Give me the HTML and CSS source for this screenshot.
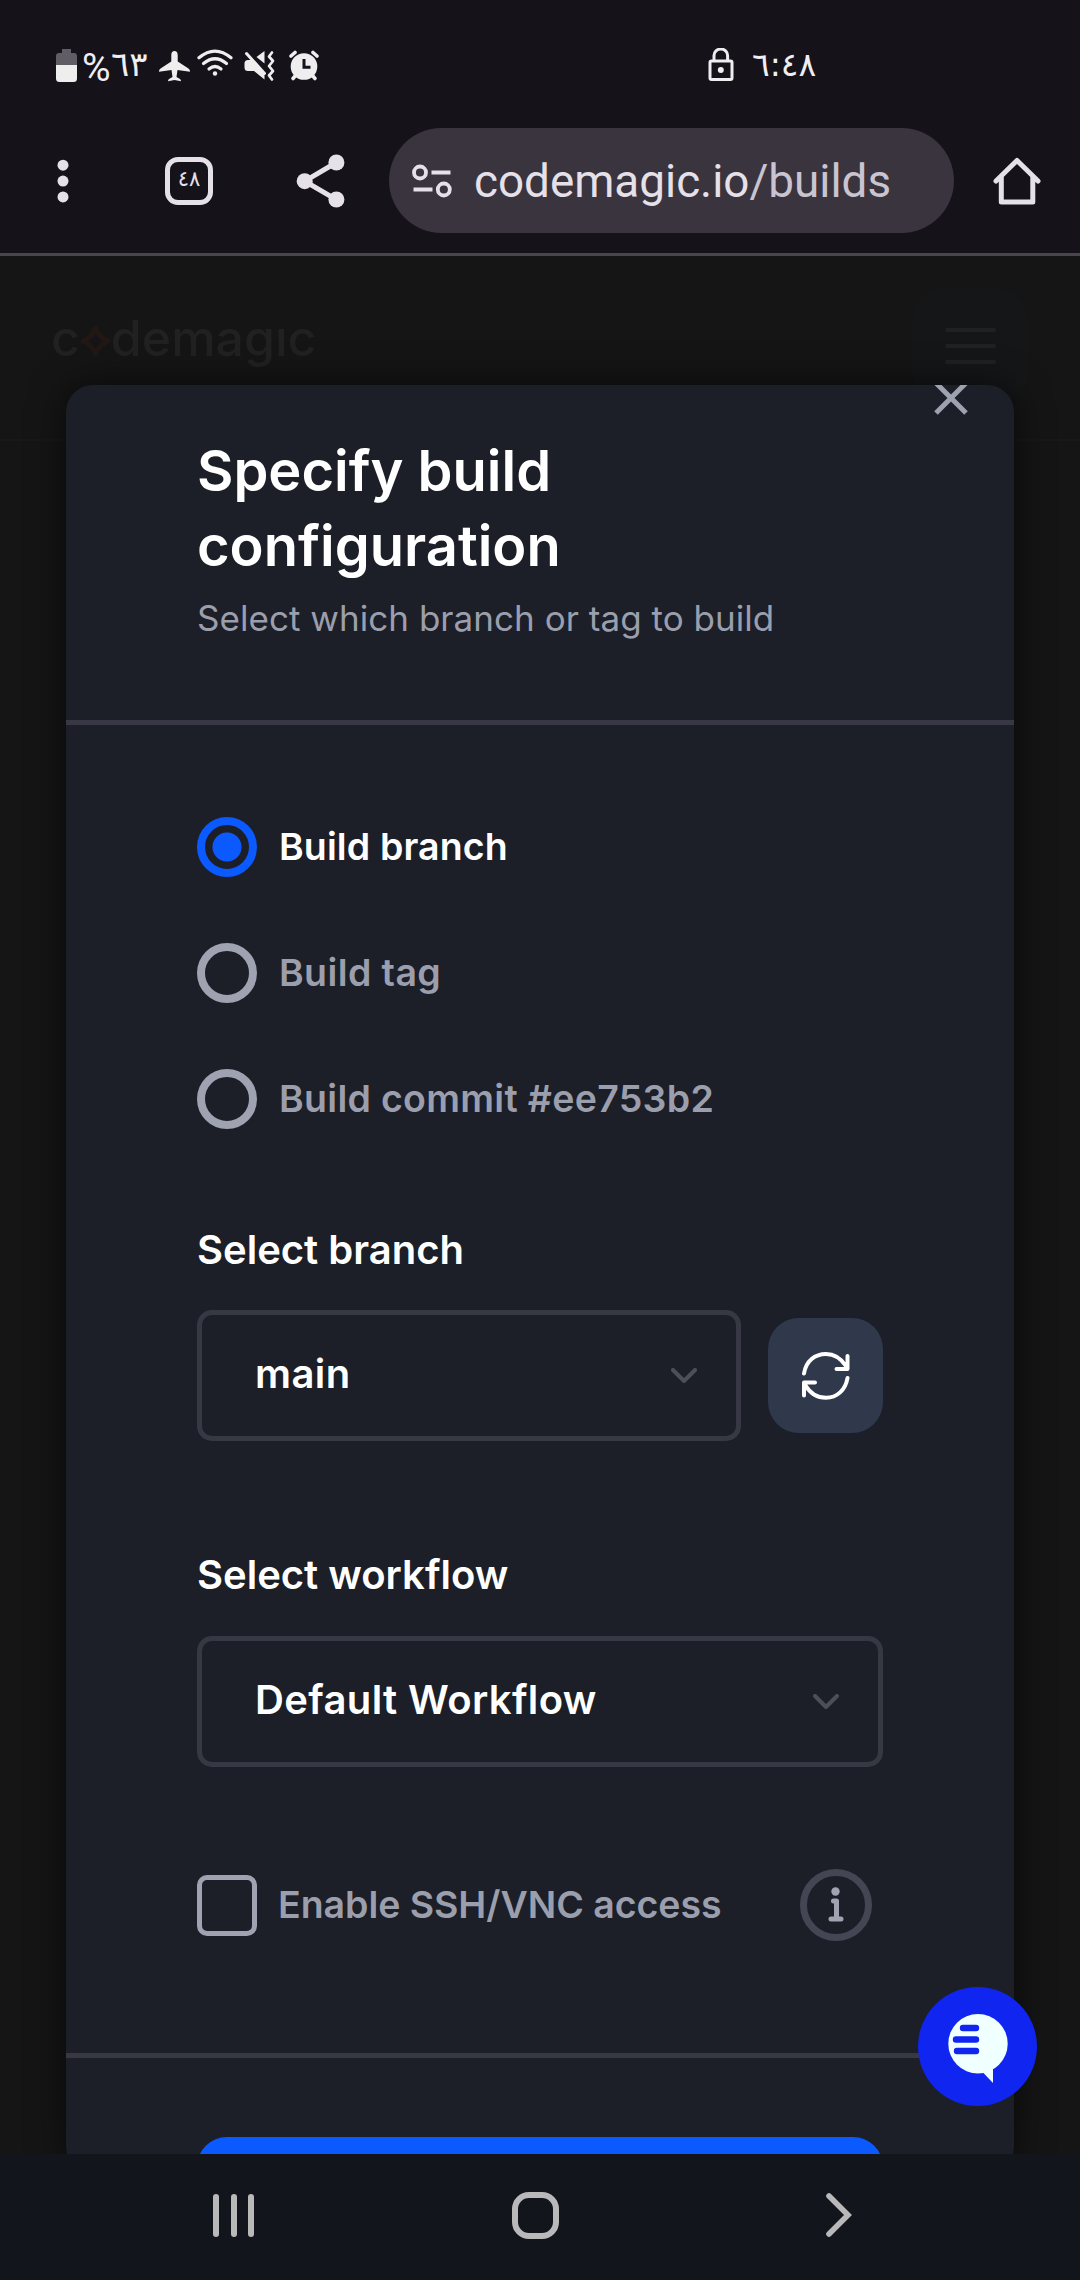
FILE: index.html
```html
<!DOCTYPE html>
<html lang="en">
<head>
<meta charset="utf-8">
<title>Codemagic builds</title>
<link rel="stylesheet" href="styles.css">
</head>
<body>
<div class="screen">
  <header class="chrome">
    <div class="status">
      <div class="status-left">
        <svg width="21" height="34" viewBox="56 48 21 34"><path d="M62 49h9v4h3q3 0 3 3v9H56v-9q0-3 3-3h3z" fill="#605d66"/><path d="M56 65h21v13.500q0 3.500-3.500 3.500h-14q-3.500 0-3.500-3.500z" fill="#eee"/></svg>
        <span class="percent">%</span>
        <span class="digits battery-digits">٦٣</span>
        <svg class="plane" width="31" height="34" viewBox="159 48 31 34"><path d="M174.500 51c2 0 3.200 1.500 3.200 4v6.500l10 6.500c1.500 1 2.300 2 2.300 3.800l-12.500-1.800-1 7 3.500 2q1 .8 1 2.300l-6.500-1.300-6.500 1.300q0-1.500 1-2.300l3.500-2-1-7-12.500 1.800c0-1.800.8-2.800 2.300-3.800l10-6.500V55c0-2.500 1.200-4 3.200-4z" fill="#eee"/></svg>
        <svg class="wifi" width="38" height="34" viewBox="196 48 38 34"><g fill="none" stroke="#eee" stroke-width="3.200" stroke-linecap="round"><path d="M199 57.800q16-13.500 32 0"/><path d="M203.500 63.500q11.500-9.500 23 0"/><path d="M209 69q6-5 12 0"/></g><circle cx="215" cy="73.500" r="2.200" fill="#eee"/></svg>
        <svg class="mute" width="31" height="34" viewBox="244 48 31 34"><path d="M264.500 51v12.500l-8-6.500zM248 60h4.500l12 13v6.500L254 71h-6q-3.500 0-3.500-3.500v-4q0-3.500 3.500-3.500z" fill="#eee"/><path d="M246.500 53.500l18 20" stroke="#eee" stroke-width="3" stroke-linecap="round"/><path d="M272 52.500l-3 4 4 4.500-4 5 4 5-4 4.500 3 4" fill="none" stroke="#eee" stroke-width="2.700" stroke-linecap="round" stroke-linejoin="round"/></svg>
        <svg class="alarm" width="30" height="34" viewBox="288.500 48 30 34"><circle cx="303.500" cy="66.500" r="13.300" fill="#eee"/><path d="M290.500 56l4-3.500M316.500 56l-4-3.500" stroke="#eee" stroke-width="3.600" stroke-linecap="round"/><path d="M295.500 75l-3 3.500M311.500 75l3 3.500" stroke="#eee" stroke-width="3.600" stroke-linecap="round"/><path d="M303.500 59v8.300h6.500" fill="none" stroke="#15121a" stroke-width="3"/></svg>
      </div>
      <div class="status-right">
        <svg width="26" height="34" viewBox="708.500 48 26 34"><rect x="710.500" y="61" width="22" height="18.500" rx="1.500" fill="none" stroke="#eee" stroke-width="3"/><path d="M714.500 60v-4.500a6.800 6.500 0 0 1 13.600 0V60" fill="none" stroke="#eee" stroke-width="3"/><circle cx="721.300" cy="70" r="3" fill="#eee"/></svg>
        <span class="digits clock">٦:٤٨</span>
      </div>
    </div>
    <div class="toolbar">
      <svg class="dots" width="12" height="48" viewBox="57.500 156.500 12 48" fill="#e6e0e9"><circle cx="63.500" cy="164.700" r="5.500"/><circle cx="63.500" cy="180.600" r="5.500"/><circle cx="63.500" cy="196.400" r="5.500"/></svg>
      <div class="tabs">٤٨</div>
      <svg class="share" width="50" height="56" viewBox="295 152.500 50 56" fill="#e6e0e9"><path d="M336.400 162l-31.700 18.700 31.700 18.500" fill="none" stroke="#e6e0e9" stroke-width="5"/><circle cx="304.700" cy="180.700" r="8"/><circle cx="336.400" cy="162" r="8"/><circle cx="336.400" cy="199" r="8"/></svg>
      <div class="omnibox">
        <svg width="42" height="36" viewBox="410.500 162.500 42 36" fill="none" stroke="#e6e0e9" stroke-width="3.800"><circle cx="419.500" cy="172" r="6"/><path d="M431 172h19M413 189h19"/><circle cx="443.300" cy="189" r="6"/></svg>
        <span class="url">codemagic.io<span class="path">/builds</span></span>
      </div>
      <svg class="home" width="50" height="50" viewBox="992.500 155.500 50 50"><path d="M996.500 180.500l21-20.500 21 20.500M1001.800 176v25.500h31.500V176" fill="none" stroke="#e6e0e9" stroke-width="5" stroke-linejoin="round" stroke-linecap="round"/></svg>
    </div>
  </header>

  <main class="viewport">
    <div class="site-header">
      <div class="logo">c<svg width="31" height="32" viewBox="0 0 31 32"><path d="M15.500 3q3.500 9.500 12.500 13-9 3.500-12.500 13Q12 19.500 3 16q9-3.500 12.500-13z" fill="none" stroke="#211816" stroke-width="5" stroke-linejoin="round"/></svg>demagıc</div>
      <div class="burger"><span></span><span></span><span></span></div>
    </div>
    <section class="modal">
      <div class="modal-head">
        <h1>Specify build<br>configuration</h1>
        <p>Select which branch or tag to build</p>
        <svg class="close" width="34" height="34" viewBox="0 0 34 34"><path d="M2 2l30 30M32 2L2 32" stroke="#9da1b0" stroke-width="5"/></svg>
      </div>
      <div class="modal-body">
        <div class="radios">
          <div class="radio checked"><i></i><span class="branch">Build branch</span></div>
          <div class="radio"><i></i><span class="tag">Build tag</span></div>
          <div class="radio"><i></i><span class="commit">Build commit #ee753b2</span></div>
        </div>
        <h2 class="branch-label">Select branch</h2>
        <div class="branch-row">
          <div class="select"><span class="main-value">main</span><svg width="26" height="16" viewBox="0 0 26 16"><path d="M2 2l11 11L24 2" fill="none" stroke="#4c4e58" stroke-width="4" stroke-linecap="round" stroke-linejoin="round"/></svg></div>
          <button class="refresh"><svg width="48" height="48" viewBox="0 0 48 48" fill="none" stroke="#fff" stroke-width="4" stroke-linecap="round" stroke-linejoin="round"><path d="M2 21.500C4 9 13 2 24 2c8.500 0 15 4.500 20 12M45.500 4v13H34.500M45.500 26C43.500 38 35 45.800 24 45.800c-8.500 0-16-4.800-20.500-12.300M2 43.500v-13h11"/></svg></button>
        </div>
        <h2 class="workflow-label">Select workflow</h2>
        <div class="select workflow"><span>Default Workflow</span><svg width="26" height="16" viewBox="0 0 26 16"><path d="M2 2l11 11L24 2" fill="none" stroke="#4c4e58" stroke-width="4" stroke-linecap="round" stroke-linejoin="round"/></svg></div>
        <div class="ssh">
          <i class="box"></i><span>Enable SSH/VNC access</span>
          <svg width="72" height="72" viewBox="0 0 72 72"><circle cx="36" cy="36" r="32.500" fill="none" stroke="#444654" stroke-width="7"/><circle cx="35.500" cy="22.500" r="4.200" fill="#a0a4b2"/><path d="M33.500 32H36.500V49.500M31 50h10" fill="none" stroke="#a0a4b2" stroke-width="5" stroke-linecap="round" stroke-linejoin="round"/></svg>
        </div>
      </div>
      <div class="modal-foot"><button class="start"></button></div>
    </section>
    <button class="chat"><svg width="60" height="70" viewBox="0 0 60 70"><g fill="#f0ffff"><circle cx="30" cy="29.700" r="29.700"/><path d="M45 54v15L34.500 58z"/></g><path d="M15 14h13M8 25.500h20M9 37h19" stroke="#1026f0" stroke-width="6.400" stroke-linecap="round"/></svg></button>
  </main>

  <nav class="nav">
    <div class="recents"><i></i><i></i><i></i></div>
    <div class="home-key"></div>
    <svg width="26" height="44" viewBox="0 0 26 44"><path d="M3 3l19 19L3 41" fill="none" stroke="#b9b9b9" stroke-width="5.600" stroke-linecap="round"/></svg>
  </nav>
</div>
</body>
</html>
```
FILE: styles.css
```css
* { box-sizing: border-box; margin: 0; padding: 0; }
body { width: 1080px; background: #151515; font-family: Inter, "Liberation Sans", sans-serif; }
svg { display: block; flex: none; }
button { border: 0; }

.screen { height: 2280px; display: flex; flex-direction: column; overflow: hidden; }

/* browser chrome */
.chrome { height: 256px; flex: none; background: #15121a; border-bottom: 3px solid #49454f; font-family: Roboto, sans-serif; }
.status { height: 128px; padding: 48px 0 0 56px; display: flex; color: #f0eef2; }
.status-left { width: 652px; display: flex; flex: none; }
.status-right { display: flex; }
.percent { width: 28px; margin-left: 5px; font-size: 39px; line-height: 34px; padding-top: 3px; }
.digits { font-family: "DejaVu Sans", sans-serif; font-size: 34px; line-height: 33px; direction: ltr; white-space: nowrap; }
.battery-digits { width: 36px; margin-left: 1px; }
.plane { margin-left: 12px; }
.wifi { margin-left: 6px; }
.mute { margin-left: 10px; }
.alarm { margin-left: 14px; }
.clock { margin-left: 18px; font-size: 33px; letter-spacing: -2.400px; }

.toolbar { height: 105px; display: flex; align-items: center; padding-left: 57px; }
.tabs { width: 48px; height: 48px; margin-left: 96px; border: 5px solid #e6e0e9; border-radius: 13px; color: #e6e0e9; font: 21px/34px "DejaVu Sans", sans-serif; text-align: center; }
.share { margin-left: 82px; }
.omnibox { width: 565px; height: 105px; margin-left: 44px; padding-left: 22px; border-radius: 53px; background: #3a343e; display: flex; align-items: center; }
.url { margin-left: 21px; padding-top: 2px; font-size: 45.800px; color: #e6e0e9; white-space: nowrap; }
.url .path { color: #cac4d0; }
.home { margin-left: 38px; }

/* page behind the dialog */
.viewport { position: relative; flex: 1; min-height: 0; overflow: hidden; display: grid; grid-template-rows: 1898px; background: #151515; }
.site-header { grid-area: 1 / 1; height: 185px; padding: 32px 52px 0 51px; display: flex; justify-content: space-between; border-bottom: 2px solid #181818; }
.logo { height: 100px; display: flex; align-items: center; font-size: 50px; font-weight: 500; color: #212121; }
.logo svg { margin: 5px 0 0; }
.burger { width: 116px; height: 116px; border-radius: 32px; background: #151618; display: flex; flex-direction: column; align-items: center; justify-content: center; gap: 12px; }
.burger span { width: 51px; height: 4px; border-radius: 2px; background: #212121; }

.modal { position: relative; grid-area: 1 / 1; width: 948px; height: 1788px; margin: 129px 0 0 66px; border-radius: 27px; background: #1c1f27; box-shadow: 0 0 36px rgba(0, 0, 0, .6); overflow: hidden; }
.modal-head { height: 340px; padding: 49px 131px 0; border-bottom: 5px solid #373844; }
.modal-head h1 { font-size: 56px; line-height: 75px; font-weight: 600; color: #fff; }
.modal-head p { margin-top: 9px; font-size: 35px; line-height: 50px; letter-spacing: .04px; color: #9b9eac; white-space: nowrap; }
.close { position: absolute; top: -4px; right: 46px; }
.modal-body { height: 1333px; padding: 92px 131px 0; border-bottom: 5px solid #373844; }
.radios { display: flex; flex-direction: column; gap: 66px; }
.radio { height: 60px; display: flex; align-items: center; gap: 22px; font-size: 37.500px; font-weight: 600; color: #9b9eac; white-space: nowrap; }
.radio span { padding-bottom: 2px; }
.radio i { width: 60px; height: 60px; border: 8px solid #9fa2b0; border-radius: 50%; }
.radio.checked { color: #fff; }
.radio.checked i { border-color: #0a5aff; background: radial-gradient(circle, #0a5aff 14px, transparent 15px); }
.branch { letter-spacing: .12px; }
.tag { letter-spacing: .4px; }
.commit { letter-spacing: .3px; }
h2 { font-size: 40px; line-height: 50px; font-weight: 600; color: #fff; }
.branch-label { margin: 96px 0 35px; }
.branch-row { display: flex; align-items: center; gap: 27px; }
.select { flex: 1; height: 131px; padding: 0 39px 0 53px; border: 5px solid #373844; border-radius: 15px; display: flex; align-items: center; justify-content: space-between; font-size: 40px; font-weight: 600; color: #fff; }
.select span { padding-bottom: 5px; }
.main-value { letter-spacing: .4px; }
.refresh { width: 115px; height: 115px; border-radius: 31px; background: #30384c; display: flex; align-items: center; justify-content: center; }
.workflow-label { margin: 109px 0 36px; }
.workflow { letter-spacing: .37px; }
.ssh { margin-top: 102px; height: 72px; padding-right: 11px; display: flex; align-items: center; font-size: 37.500px; font-weight: 600; color: #9b9eac; white-space: nowrap; }
.ssh span { flex: 1; margin-left: 21px; padding-bottom: 2px; letter-spacing: -.05px; }
.box { width: 60px; height: 61px; border: 5px solid #9fa2b0; border-radius: 10px; }
.modal-foot { padding: 79px 131px 0; }
.start { display: block; width: 686px; height: 120px; border-radius: 30px; background: #0a5aff; }

.chat { position: absolute; right: 43px; bottom: 48px; width: 119px; height: 119px; padding: 27px 0 0 30px; border-radius: 50%; background: #1026f0; display: flex; align-items: flex-start; }

/* system navigation */
.nav { height: 126px; flex: none; display: flex; align-items: center; padding: 0 0 4px 213px; background: #12151c; }
.recents { display: flex; gap: 11.500px; }
.recents i { width: 6px; height: 43px; border-radius: 3px; background: #b9b9b9; }
.home-key { width: 47px; height: 47px; margin: 0 267px 0 258px; border: 6px solid #b9b9b9; border-radius: 17px; }
```
